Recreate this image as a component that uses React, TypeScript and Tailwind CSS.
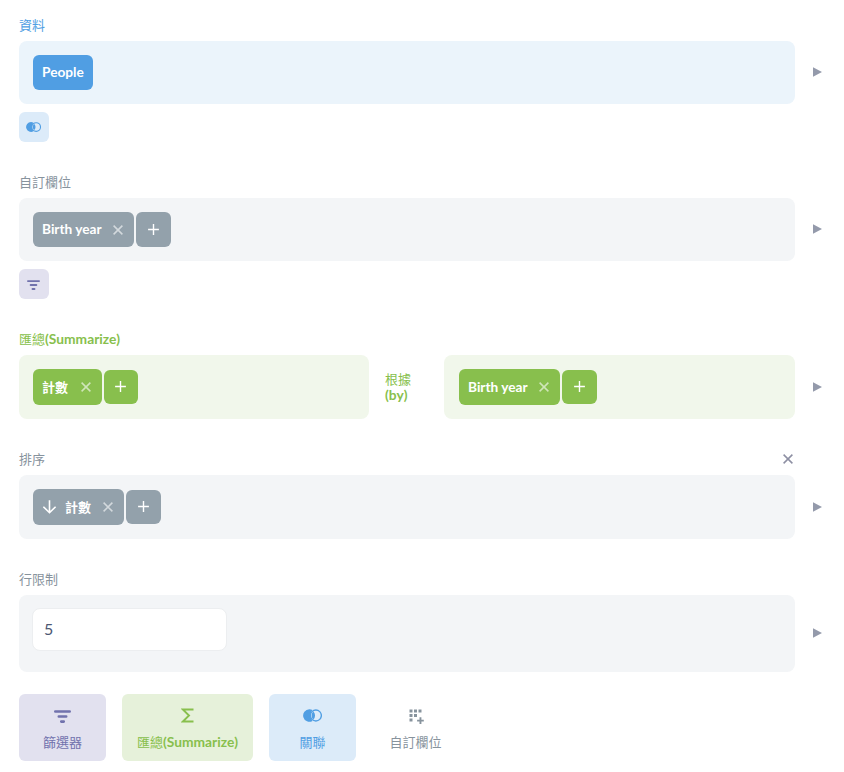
import type { ReactNode } from 'react';
import clsx from 'clsx';

type IconProps = { className?: string };

function JoinIcon({ className }: IconProps) {
  return (
    <svg viewBox="0 0 18 12" className={className} fill="none">
      <path d="M6 .1a5.900 5.900 0 1 0 3 11A7 7 0 0 1 7.100 6 7 7 0 0 1 9 .9 5.900 5.900 0 0 0 6 .1Z" fill="currentColor" />
      <path d="M9.700 2a5.500 5.500 0 0 1 0 8A5.900 5.900 0 0 1 8.200 6 5.900 5.900 0 0 1 9.700 2Z" fill="currentColor" />
      <circle cx="12.200" cy="6" r="5.200" stroke="currentColor" strokeWidth="1.300" />
    </svg>
  );
}

function FilterIcon({ className }: IconProps) {
  return (
    <svg viewBox="0 0 16 12" className={className} fill="none" stroke="currentColor" strokeWidth="2.4" strokeLinecap="round">
      <path d="M1.200 1.200h13.600M4.500 6h7M6.800 10.800h2.400" />
    </svg>
  );
}

function SumIcon({ className }: IconProps) {
  return (
    <svg viewBox="0 0 13 14" className={className} fill="none" stroke="currentColor" strokeWidth="1.900">
      <path d="M12.500 1H1.800l6.200 6-6.200 6h10.700" />
    </svg>
  );
}

function CustomColumnIcon({ className }: IconProps) {
  return (
    <svg viewBox="0 0 15 15" className={className} fill="currentColor">
      <path d="M.5.5h3v3h-3zM5 .5h3v3H5zM9.500.5h3v3h-3zM.5 5h3v3h-3zM5 5h3v3H5zM.5 9.500h3v3h-3zM10.500 8.300h1.900v2.400h2.400v1.900h-2.400V15h-1.900v-2.400H8.100v-1.900h2.400z" />
    </svg>
  );
}

function CloseIcon({ className }: IconProps) {
  return (
    <svg viewBox="0 0 10 10" className={className} fill="none" stroke="currentColor" strokeWidth="1.500">
      <path d="M.6.6l8.800 8.800M9.400.6.6 9.400" />
    </svg>
  );
}

function PlusIcon() {
  return (
    <svg viewBox="0 0 12 12" className="size-3" fill="none" stroke="currentColor" strokeWidth="1.400">
      <path d="M5.500.1v10.800M.1 5.500h10.800" />
    </svg>
  );
}

function ArrowDownIcon() {
  return (
    <svg viewBox="0 0 14 14" className="ml-px mr-2 h-3.5 w-3.5" fill="none" stroke="currentColor" strokeWidth="1.600">
      <path d="M6.500.3v12.500M.4 6.700l6.100 6 6.100-6" />
    </svg>
  );
}

const CHIP_COLORS = {
  blue: 'bg-[#509ee3]',
  gray: 'bg-[#93a1ab]',
  green: 'bg-[#88bf4d]',
};

const PANEL_COLORS = {
  blue: 'bg-[#ebf4fb]',
  gray: 'bg-[#f3f5f7]',
  green: 'bg-[#f1f7eb]',
};

const LABEL_COLORS = {
  blue: 'text-[#509ee3]',
  gray: 'text-[#87939d]',
  green: 'text-[#88bf4d]',
};

type Color = keyof typeof CHIP_COLORS;

// Chinese runs are set lighter and slightly smaller than the bold Latin text
function Zh({ children }: { children: ReactNode }) {
  return <span className="text-[13px] font-normal">{children}</span>;
}

function Chip({ color, className, icon, children, removable }: {
  color: Color;
  className: string;
  icon?: ReactNode;
  children: ReactNode;
  removable?: boolean;
}) {
  return (
    <div className={clsx('flex items-center whitespace-nowrap rounded-md pl-[9px] text-[13.700px] font-bold text-white', CHIP_COLORS[color], className)}>
      {icon}
      <span>{children}</span>
      {removable && <CloseIcon className="ml-auto mr-[11.500px] size-2.5 opacity-60" />}
    </div>
  );
}

function AddButton({ color, className }: { color: Color; className: string }) {
  return (
    <button className={clsx('flex items-center justify-center rounded-md text-white', CHIP_COLORS[color], className)}>
      <PlusIcon />
    </button>
  );
}

function Panel({ color, className, children }: { color: Color; className: string; children: ReactNode }) {
  return (
    <div className={clsx('flex items-center gap-0.5 rounded-lg px-3.5', PANEL_COLORS[color], className)}>
      {children}
    </div>
  );
}

function Step({ title, color, closable, children, action }: {
  title: ReactNode;
  color: Color;
  closable?: boolean;
  children: ReactNode;
  action?: ReactNode;
}) {
  return (
    <section>
      <div className={clsx('mb-2 flex h-4 w-[776px] items-center justify-between pr-[2.500px] text-[13.800px] font-bold', LABEL_COLORS[color])}>
        <h2>{title}</h2>
        {closable && <CloseIcon className="size-2.5 text-[#8d8fa3]" />}
      </div>
      <div className="flex items-center">
        <div className="flex w-[776px]">{children}</div>
        <svg viewBox="0 0 9 10" className="-mt-px ml-[18px] h-2.5 w-[9px] fill-[#949aab]">
          <path d="M0 .3 9 5 0 9.700z" />
        </svg>
      </div>
      {action}
    </section>
  );
}

export default function App() {
  return (
    <main className="flex h-[772px] w-[844px] flex-col gap-8 bg-white pl-[19px] pt-[17px] font-[Lato,'Noto_Sans_CJK_TC',sans-serif]">
      <Step
        title={<Zh>資料</Zh>}
        color="blue"
        action={
          <button className="mt-2 flex size-[30px] items-center justify-center rounded-md bg-[#dcebf9] pr-px text-[#509ee3]">
            <JoinIcon className="h-2.5 w-[15px]" />
          </button>
        }
      >
        <Panel color="blue" className="h-[63px] w-full">
          <Chip color="blue" className="h-[35px] w-[60px]">People</Chip>
        </Panel>
      </Step>

      <Step
        title={<Zh>自訂欄位</Zh>}
        color="gray"
        action={
          <button className="mt-2 flex size-[30px] items-center justify-center rounded-md bg-[#e2e1ef] pr-px text-[#7172ad]">
            <FilterIcon className="mt-0.5 h-2.5 w-[13px]" />
          </button>
        }
      >
        <Panel color="gray" className="h-[63px] w-full">
          <Chip color="gray" className="h-[35px] w-[101px]" removable>Birth year</Chip>
          <AddButton color="gray" className="size-[35px]" />
        </Panel>
      </Step>

      <Step title={<><Zh>匯總</Zh>(Summarize)</>} color="green">
        <Panel color="green" className="h-16 w-[350px]">
          <Chip color="green" className="h-9 w-[69px]" removable><span className="text-[13px]">計數</span></Chip>
          <AddButton color="green" className="size-[34px]" />
        </Panel>
        <div className="flex w-[75px] items-center pl-4 text-[13.800px] font-bold leading-4 text-[#88bf4d]">
          <span className="w-8"><Zh>根據</Zh> (by)</span>
        </div>
        <Panel color="green" className="h-16 w-[351px] pl-[15px]">
          <Chip color="green" className="h-9 w-[101px]" removable>Birth year</Chip>
          <AddButton color="green" className="h-[34px] w-[35px]" />
        </Panel>
      </Step>

      <Step title={<Zh>排序</Zh>} color="gray" closable>
        <Panel color="gray" className="h-16 w-full">
          <Chip color="gray" className="h-9 w-[91px]" icon={<ArrowDownIcon />} removable><span className="text-[13px]">計數</span></Chip>
          <AddButton color="gray" className="h-[34px] w-[35px]" />
        </Panel>
      </Step>

      <Step title={<Zh>行限制</Zh>} color="gray">
        <Panel color="gray" className="h-[77px] w-full pb-2 pl-[13px]">
          <input
            defaultValue="5"
            className="h-[43px] w-[195px] rounded-lg border border-[#eceef0] bg-white px-[11px] pb-0.5 text-base text-[#4c5773]"
          />
        </Panel>
      </Step>

      <div className="-mt-2.5 flex gap-4 text-[13.800px] font-bold">
        <button className="flex h-[67px] w-[87px] flex-col items-center rounded-md bg-[#e2e1ef] pt-4 text-[#7172ad]">
          <FilterIcon className="h-[13px] w-[17px]" />
          <span className="mt-[9px] leading-5"><Zh>篩選器</Zh></span>
        </button>
        <button className="flex h-[67px] w-[131px] flex-col items-center rounded-md bg-[#e6f1da] pt-3.5 text-[#88bf4d]">
          <SumIcon className="h-[15px] w-[13px]" />
          <span className="mt-[9px] leading-5"><Zh>匯總</Zh>(Summarize)</span>
        </button>
        <button className="flex h-[67px] w-[87px] flex-col items-center rounded-md bg-[#dcebf9] pt-[15px] text-[#509ee3]">
          <JoinIcon className="h-[13px] w-[19px]" />
          <span className="mt-2.5 leading-5"><Zh>關聯</Zh></span>
        </button>
        <button className="flex h-[67px] w-[87px] flex-col items-center pt-[15px] text-[#87939d]">
          <CustomColumnIcon className="ml-px size-[15px]" />
          <span className="mt-2 leading-5"><Zh>自訂欄位</Zh></span>
        </button>
      </div>
    </main>
  );
}
